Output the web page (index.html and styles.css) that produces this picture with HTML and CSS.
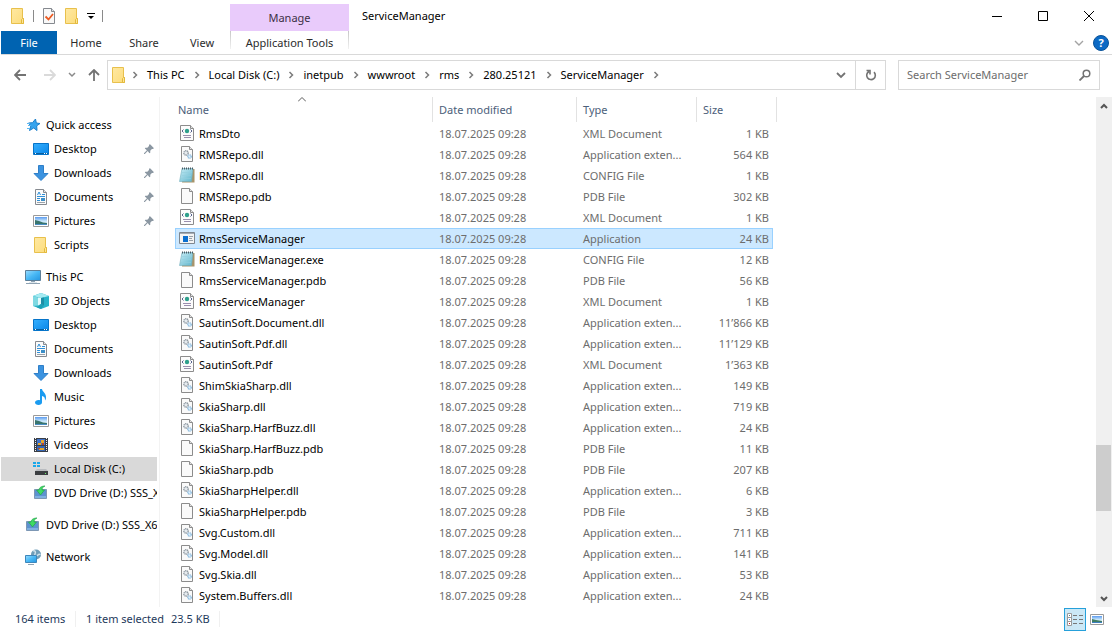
FILE: index.html
```html
<!DOCTYPE html>
<html lang="en">
<head>
    <meta charset="UTF-8">
    <meta name="viewport" content="width=device-width, initial-scale=1.0">
    <title>ServiceManager</title>
    <link rel="stylesheet" href="styles.css">
</head>
<body>

    <!-- Icon set -->
    <svg class="sprite" aria-hidden="true">
        <defs>
            <linearGradient id="gScreen" x1="0" y1="0" x2="1" y2="1">
                <stop offset="0" stop-color="#35b0ff"/><stop offset="1" stop-color="#0a86e8"/>
            </linearGradient>
            <linearGradient id="gPc" x1="0" y1="0" x2="1" y2="1">
                <stop offset="0" stop-color="#9adcff"/><stop offset="0.5" stop-color="#48b8f5"/><stop offset="1" stop-color="#2595e0"/>
            </linearGradient>
            <linearGradient id="gNote" x1="0" y1="0" x2="1" y2="1">
                <stop offset="0" stop-color="#c8edf5"/><stop offset="1" stop-color="#5fb5cc"/>
            </linearGradient>
            <linearGradient id="gFolder" x1="0" y1="0" x2="1" y2="1">
                <stop offset="0" stop-color="#ffe9a2"/><stop offset="1" stop-color="#fcdc7c"/>
            </linearGradient>
            <linearGradient id="gSky" x1="0" y1="0" x2="0" y2="1">
                <stop offset="0" stop-color="#5b9bf0"/><stop offset="0.5" stop-color="#c8e6fa"/><stop offset="1" stop-color="#e8f4fa"/>
            </linearGradient>
        </defs>
        <symbol id="i-folder" viewBox="0 0 16 16">
            <path d="M1.500.500h11v10h1v5h-12z" fill="url(#gFolder)" stroke="#e8c04c"/>
            <path d="M11.500 15.500v-4l1-1h1v5z" fill="#fde596" stroke="#e3b93c"/>
        </symbol>
        <symbol id="i-props" viewBox="0 0 16 16">
            <path d="M2.500.500h8l3 3v12h-11z" fill="#f8f8f8" stroke="#85898f"/>
            <path d="M10.500.500v3h3" fill="#dfe2e6" stroke="#85898f"/>
            <path d="M4.500 8.500l3 3 4.500-5.500" fill="none" stroke="#ea5a22" stroke-width="1.800"/>
        </symbol>
        <symbol id="i-star" viewBox="0 0 16 16">
            <path d="M10.500 2l.8 4 3.700.5-3.300 2.300.3 4.700-3.300-2.500-4.200 2.500 1.300-4.500L3.500 6l4-.3z" fill="#36a4ee" stroke="#1c7fcb"/>
            <path d="M2 6.500h3M3 8.500h3M2 11.500h3" stroke="#5cb6f0"/>
        </symbol>
        <symbol id="i-desktop" viewBox="0 0 16 16">
            <path d="M.500 2.500h15v11H.5z" fill="url(#gScreen)" stroke="#0674c9"/>
            <path d="M1 12.500h14" stroke="#085f9f"/>
            <path d="M2 12.500h1M11 12.500h1M13 12.500h1" stroke="#fff"/>
        </symbol>
        <symbol id="i-download" viewBox="0 0 16 16">
            <path d="M5.500.500h5v8h4.500L8 15.500 1 8.500h4.500z" fill="#3b93e0" stroke="#2f7fc8"/>
        </symbol>
        <symbol id="i-doc" viewBox="0 0 16 16">
            <path d="M2.500.500h8l3 3v12h-11z" fill="#fbfbfb" stroke="#868a90"/>
            <path d="M10.500.500v3h3" fill="#e2e5e8" stroke="#868a90"/>
            <path d="M4.500 6l1.500-3 1.500 3M9 5.500h3M4 7.500h8M4 9.500h3M4 11.500h3" fill="none" stroke="#2e8fd8"/>
            <path d="M8 9h4v3H8z" fill="#3c8fc8"/>
            <path d="M4 13.500h8" stroke="#9aa3ab"/>
        </symbol>
        <symbol id="i-picture" viewBox="0 0 16 16">
            <path d="M.500 2.500h15v11H.5z" fill="#fff" stroke="#9a9a9a"/>
            <path d="M2 4h12v8H2z" fill="url(#gSky)"/>
            <path d="M2 7l4 1 4 1.500 4 .5v2H2z" fill="#39756e"/>
            <path d="M2 11h12v1H2z" fill="#4a8ec4"/>
        </symbol>
        <symbol id="i-pc" viewBox="0 0 16 16">
            <path d="M.500 1.500h15v10H.5z" fill="url(#gPc)" stroke="#5c7f99"/>
            <path d="M6 12.500h4M1 14.500h14" stroke="#8fa3b3"/>
            <path d="M4 13.500h8" stroke="#dde6ec"/>
        </symbol>
        <symbol id="i-cube" viewBox="0 0 16 16">
            <path d="M0 3l8-3 8 3v10l-8 3-8-3z" fill="#27b3c8"/>
            <path d="M0 3l8-3 8 3-8 2z" fill="#a6ebf2"/>
            <path d="M0 3l5 1.500v8L0 13z" fill="#7fd9e2"/>
            <path d="M5 4.500L8 5v6l-3 1.500z" fill="#e3fafc"/>
            <path d="M8 5l3-.5v8L8 11z" fill="#1d8ea6"/>
            <path d="M8 11l3 1.500L8 16l-4-1.500z" fill="#1f9fb4"/>
        </symbol>
        <symbol id="i-music" viewBox="0 0 16 16">
            <path d="M7 0h2c.3 3 4.500 4 4 9-.1 1-.5 2-1 2.500.3-2.800-1-4.200-3-4.500v6.500C9 15 7.500 16 5.500 16S2 15 2 13.500 3.500 11 5.500 11c.600 0 1.100.1 1.500.3z" fill="#1a9bf0"/>
        </symbol>
        <symbol id="i-video" viewBox="0 0 16 16">
            <path d="M1 1h14v14H1z" fill="#3b3f46"/>
            <path d="M4 2h8v6H4z" fill="#3f72c8"/>
            <path d="M4 9h8v5H4z" fill="#3566b4"/>
            <path d="M5 6h3v2H5zM8 3h3v3H8zM6 11h5v2H6z" fill="#e9a72a"/>
            <path d="M9 6h2v2H9zM5 11h2v1H5z" fill="#b5472c"/>
            <path d="M2.500 1v14M13.500 1v14" stroke="#f2f2f2" stroke-dasharray="1 1"/>
        </symbol>
        <symbol id="i-disk" viewBox="0 0 16 16">
            <path d="M0 1h3v2H0zM4 1h3v2H4zM0 4h3v2H0zM4 4h3v2H4z" fill="#19a8ea"/>
            <path d="M4 8h9l2 2H2z" fill="#b9bcc0"/>
            <path d="M2 10h13v4H2z" fill="#3c3f42"/>
            <path d="M12 12h1v1h-1z" fill="#6cf06c"/>
        </symbol>
        <symbol id="i-dvd" viewBox="0 0 16 16">
            <path d="M1.500 4.500h12v9h-12z" fill="#5c93cf" stroke="#7d97b4"/>
            <path d="M2 11h11v2H2z" fill="#7eb0e0"/>
            <path d="M12 1c-4 0-6 2-6 4H3.500l4 5 4-5H9c0-2 1-3 3-4z" fill="#3edb62" stroke="#1b9c44" stroke-width=".6"/>
        </symbol>
        <symbol id="i-network" viewBox="0 0 16 16">
            <circle cx="11" cy="5.500" r="5" fill="#6f9db8"/>
            <path d="M8 2c2-1 3 1 2 3s2 2 3 1 2-1 2 0" fill="none" stroke="#cfe2ec" stroke-width="1.500"/>
            <path d="M.500 6.500h11v7H.5z" fill="url(#gPc)" stroke="#3d86bb"/>
            <path d="M3 15.500h6" stroke="#8fa3b3"/>
        </symbol>
        <symbol id="i-pin" viewBox="0 0 12 12">
            <path d="M7 0l5 5-1.500 1-1 0-2 2v2.500l-1 .5-2-2.500L1 12H0v-1l3.500-3.500L1 5.500l.5-1H4l2-2v-1z" fill="#8b97a2"/>
        </symbol>
        <symbol id="f-xml" viewBox="0 0 16 16">
            <path d="M1.500.500h10l3 3v12h-13z" fill="#fcfcfc" stroke="#8c8c8c"/>
            <path d="M11.500.500v3h3" fill="#e4e4e4" stroke="#8c8c8c"/>
            <circle cx="8" cy="6" r="2.200" fill="#2fa08c"/>
            <path d="M4.500 4.500L3 6l1.500 1.500M11.500 4.500L13 6l-1.500 1.500" fill="none" stroke="#56628c"/>
            <path d="M4 10.500h8M5 12.500h7" stroke="#9b8fae"/>
        </symbol>
        <symbol id="f-dll" viewBox="0 0 16 16">
            <path d="M2.500.500h8l3 3v12h-11z" fill="#fafafa" stroke="#8c8c8c"/>
            <path d="M10.500.500v3h3" fill="#e4e4e4" stroke="#8c8c8c"/>
            <circle cx="7" cy="7" r="2.200" fill="#e6ebef" stroke="#8f99a1" stroke-width="1.400" stroke-dasharray="1.200 .5"/>
            <circle cx="10.500" cy="10.500" r="1.700" fill="#dff0fb" stroke="#86b7dc" stroke-width="1.300" stroke-dasharray="1 .5"/>
        </symbol>
        <symbol id="f-config" viewBox="0 0 16 16">
            <path d="M4 2h11.500v13.500H3z" fill="#a8946a"/>
            <path d="M3 1.500h11l-1.500 13H.5z" fill="url(#gNote)" stroke="#72aebd" stroke-width=".6"/>
            <path d="M3 5.500h10M3 8.500h9M2 11.500h10" stroke="#93cfdd" stroke-width=".6"/>
            <path d="M3 1.500h12" stroke="#4b5a63" stroke-width="2" stroke-dasharray="1 1"/>
        </symbol>
        <symbol id="f-file" viewBox="0 0 16 16">
            <path d="M2.500.500h8l3 3v12h-11z" fill="#fafafa" stroke="#8c8c8c"/>
            <path d="M10.500.500v3h3" fill="#e4e4e4" stroke="#8c8c8c"/>
        </symbol>
        <symbol id="f-app" viewBox="0 0 16 16">
            <path d="M.500 2.500h15v11H.5z" fill="#f4f4f4" stroke="#7e8790"/>
            <path d="M1 3.500h14" stroke="#a4acb4"/>
            <path d="M4 6h5v6H4z" fill="#0a6fd0"/>
            <path d="M10 6.500h4M10 8.500h3M10 10.500h4" stroke="#98a0a8"/>
        </symbol>
        <symbol id="i-chev" viewBox="0 0 6 8">
            <path d="M1.500 1l3 3-3 3" fill="none" stroke="#7c7c7c" stroke-width="1.500"/>
        </symbol>
    </svg>

    <div class="window">

        <!-- Title bar and ribbon tabs -->
        <header class="top">
            <div class="quick-tools">
                <svg class="icon"><use href="#i-folder"/></svg>
                <span class="bar"></span>
                <button class="tool" aria-label="Properties"><svg class="icon"><use href="#i-props"/></svg></button>
                <button class="tool" aria-label="New folder"><svg class="icon"><use href="#i-folder"/></svg></button>
                <button class="tool" aria-label="Customize toolbar">
                    <svg width="8" height="8" viewBox="0 0 8 8"><path d="M0 1.500h8" stroke="#000"/><path d="M1 4h6L4 7z"/></svg>
                </button>
                <span class="bar"></span>
            </div>
            <div class="manage">Manage</div>
            <div class="title-row">
                <h1>ServiceManager</h1>
                <div class="controls">
                    <button aria-label="Minimize"><svg width="10" height="10" viewBox="0 0 10 10"><path d="M0 5.500h10"/></svg></button>
                    <button aria-label="Maximize"><svg width="10" height="10" viewBox="0 0 10 10"><path d="M.500.500h9v9H.5z"/></svg></button>
                    <button aria-label="Close"><svg width="10" height="10" viewBox="0 0 10 10"><path d="M0 0l10 10M10 0L0 10"/></svg></button>
                </div>
            </div>

            <nav class="tabs">
                <button class="tab tab-file">File</button>
                <button class="tab">Home</button>
                <button class="tab">Share</button>
                <button class="tab">View</button>
            </nav>
            <button class="tab tab-tools">Application Tools</button>
            <div class="ribbon-end">
                <button aria-label="Expand ribbon"><svg width="10" height="6" viewBox="0 0 10 6"><path d="M1 1l4 4 4-4" fill="none" stroke="#a3a3a3" stroke-width="1.400"/></svg></button>
                <button class="help" aria-label="Help">?</button>
            </div>
        </header>

        <!-- Address bar -->
        <div class="address-row">
            <div class="history">
                <button aria-label="Back"><svg width="12" height="12" viewBox="0 0 12 12"><path d="M12 6H1M6 1L1 6l5 5" fill="none" stroke="#737373" stroke-width="1.800"/></svg></button>
                <button aria-label="Forward"><svg width="12" height="12" viewBox="0 0 12 12"><path d="M0 6h11M6 1l5 5-5 5" fill="none" stroke="#dadada" stroke-width="1.800"/></svg></button>
                <button class="recent" aria-label="Recent locations"><svg width="8" height="6" viewBox="0 0 8 6"><path d="M1 1l3 3 3-3" fill="none" stroke="#8a8a8a" stroke-width="1.500"/></svg></button>
                <button class="up" aria-label="Up"><svg width="12" height="12" viewBox="0 0 12 12"><path d="M6 12V1M1 6l5-5 5 5" fill="none" stroke="#737373" stroke-width="1.800"/></svg></button>
            </div>
            <div class="address">
                <svg class="icon"><use href="#i-folder"/></svg>
                <svg class="chev"><use href="#i-chev"/></svg>
                <a href="#">This PC</a>
                <svg class="chev"><use href="#i-chev"/></svg>
                <a href="#">Local Disk (C:)</a>
                <svg class="chev"><use href="#i-chev"/></svg>
                <a href="#">inetpub</a>
                <svg class="chev"><use href="#i-chev"/></svg>
                <a href="#">wwwroot</a>
                <svg class="chev"><use href="#i-chev"/></svg>
                <a href="#">rms</a>
                <svg class="chev"><use href="#i-chev"/></svg>
                <a href="#">280.25121</a>
                <svg class="chev"><use href="#i-chev"/></svg>
                <a href="#">ServiceManager</a>
                <svg class="chev"><use href="#i-chev"/></svg>
                <button class="drop" aria-label="Previous locations"><svg width="10" height="8" viewBox="0 0 10 8"><path d="M1 2l4 4 4-4" fill="none" stroke="#737373" stroke-width="1.800"/></svg></button>
                <button class="refresh" aria-label="Refresh"><svg width="12" height="12" viewBox="0 0 12 12"><path d="M9 3.200A4.300 4.300 0 1 1 4 2.500M1.500 1.500H5v4" fill="none" stroke="#737373" stroke-width="1.600"/></svg></button>
            </div>
            <div class="search">
                <input type="text" placeholder="Search ServiceManager" aria-label="Search ServiceManager">
                <svg width="12" height="12" viewBox="0 0 12 12"><circle cx="7.500" cy="4.500" r="3.300" fill="none" stroke="#737373" stroke-width="1.500"/><path d="M5 7L.5 11.500" stroke="#737373" stroke-width="1.800"/></svg>
            </div>
        </div>

        <div class="content">

            <!-- Navigation pane -->
            <nav class="sidebar">
                <ul>
                    <li><a href="#"><svg class="icon"><use href="#i-star"/></svg>Quick access</a></li>
                    <li class="sub"><a href="#"><svg class="icon"><use href="#i-desktop"/></svg>Desktop<svg class="pin"><use href="#i-pin"/></svg></a></li>
                    <li class="sub"><a href="#"><svg class="icon"><use href="#i-download"/></svg>Downloads<svg class="pin"><use href="#i-pin"/></svg></a></li>
                    <li class="sub"><a href="#"><svg class="icon"><use href="#i-doc"/></svg>Documents<svg class="pin"><use href="#i-pin"/></svg></a></li>
                    <li class="sub"><a href="#"><svg class="icon"><use href="#i-picture"/></svg>Pictures<svg class="pin"><use href="#i-pin"/></svg></a></li>
                    <li class="sub"><a href="#"><svg class="icon"><use href="#i-folder"/></svg>Scripts</a></li>
                </ul>
                <ul>
                    <li><a href="#"><svg class="icon"><use href="#i-pc"/></svg>This PC</a></li>
                    <li class="sub"><a href="#"><svg class="icon"><use href="#i-cube"/></svg>3D Objects</a></li>
                    <li class="sub"><a href="#"><svg class="icon"><use href="#i-desktop"/></svg>Desktop</a></li>
                    <li class="sub"><a href="#"><svg class="icon"><use href="#i-doc"/></svg>Documents</a></li>
                    <li class="sub"><a href="#"><svg class="icon"><use href="#i-download"/></svg>Downloads</a></li>
                    <li class="sub"><a href="#"><svg class="icon"><use href="#i-music"/></svg>Music</a></li>
                    <li class="sub"><a href="#"><svg class="icon"><use href="#i-picture"/></svg>Pictures</a></li>
                    <li class="sub"><a href="#"><svg class="icon"><use href="#i-video"/></svg>Videos</a></li>
                    <li class="sub current"><a href="#"><svg class="icon"><use href="#i-disk"/></svg>Local Disk (C:)</a></li>
                    <li class="sub"><a href="#"><svg class="icon"><use href="#i-dvd"/></svg>DVD Drive (D:) SSS_X6</a></li>
                </ul>
                <ul>
                    <li><a href="#"><svg class="icon"><use href="#i-dvd"/></svg>DVD Drive (D:) SSS_X6</a></li>
                </ul>
                <ul>
                    <li><a href="#"><svg class="icon"><use href="#i-network"/></svg>Network</a></li>
                </ul>
            </nav>

            <!-- File list -->
            <main class="files">
                <table>
                    <colgroup>
                        <col class="c-name"><col class="c-date"><col class="c-type"><col class="c-size">
                    </colgroup>
                    <thead>
                        <tr>
                            <th>Name<svg class="sort" width="8" height="5" viewBox="0 0 8 5"><path d="M0 4.500l4-4 4 4" fill="none" stroke="#5a5a5a"/></svg></th>
                            <th>Date modified</th>
                            <th>Type</th>
                            <th>Size</th>
                        </tr>
                    </thead>
                    <tbody>
                        <tr><td><svg class="icon"><use href="#f-xml"/></svg>RmsDto</td><td>18.07.2025 09:28</td><td>XML Document</td><td>1 KB</td></tr>
                        <tr><td><svg class="icon"><use href="#f-dll"/></svg>RMSRepo.dll</td><td>18.07.2025 09:28</td><td>Application exten...</td><td>564 KB</td></tr>
                        <tr><td><svg class="icon"><use href="#f-config"/></svg>RMSRepo.dll</td><td>18.07.2025 09:28</td><td>CONFIG File</td><td>1 KB</td></tr>
                        <tr><td><svg class="icon"><use href="#f-file"/></svg>RMSRepo.pdb</td><td>18.07.2025 09:28</td><td>PDB File</td><td>302 KB</td></tr>
                        <tr><td><svg class="icon"><use href="#f-xml"/></svg>RMSRepo</td><td>18.07.2025 09:28</td><td>XML Document</td><td>1 KB</td></tr>
                        <tr class="selected"><td><svg class="icon"><use href="#f-app"/></svg>RmsServiceManager</td><td>18.07.2025 09:28</td><td>Application</td><td>24 KB</td></tr>
                        <tr><td><svg class="icon"><use href="#f-config"/></svg>RmsServiceManager.exe</td><td>18.07.2025 09:28</td><td>CONFIG File</td><td>12 KB</td></tr>
                        <tr><td><svg class="icon"><use href="#f-file"/></svg>RmsServiceManager.pdb</td><td>18.07.2025 09:28</td><td>PDB File</td><td>56 KB</td></tr>
                        <tr><td><svg class="icon"><use href="#f-xml"/></svg>RmsServiceManager</td><td>18.07.2025 09:28</td><td>XML Document</td><td>1 KB</td></tr>
                        <tr><td><svg class="icon"><use href="#f-dll"/></svg>SautinSoft.Document.dll</td><td>18.07.2025 09:28</td><td>Application exten...</td><td>11’866 KB</td></tr>
                        <tr><td><svg class="icon"><use href="#f-dll"/></svg>SautinSoft.Pdf.dll</td><td>18.07.2025 09:28</td><td>Application exten...</td><td>11’129 KB</td></tr>
                        <tr><td><svg class="icon"><use href="#f-xml"/></svg>SautinSoft.Pdf</td><td>18.07.2025 09:28</td><td>XML Document</td><td>1’363 KB</td></tr>
                        <tr><td><svg class="icon"><use href="#f-dll"/></svg>ShimSkiaSharp.dll</td><td>18.07.2025 09:28</td><td>Application exten...</td><td>149 KB</td></tr>
                        <tr><td><svg class="icon"><use href="#f-dll"/></svg>SkiaSharp.dll</td><td>18.07.2025 09:28</td><td>Application exten...</td><td>719 KB</td></tr>
                        <tr><td><svg class="icon"><use href="#f-dll"/></svg>SkiaSharp.HarfBuzz.dll</td><td>18.07.2025 09:28</td><td>Application exten...</td><td>24 KB</td></tr>
                        <tr><td><svg class="icon"><use href="#f-file"/></svg>SkiaSharp.HarfBuzz.pdb</td><td>18.07.2025 09:28</td><td>PDB File</td><td>11 KB</td></tr>
                        <tr><td><svg class="icon"><use href="#f-file"/></svg>SkiaSharp.pdb</td><td>18.07.2025 09:28</td><td>PDB File</td><td>207 KB</td></tr>
                        <tr><td><svg class="icon"><use href="#f-dll"/></svg>SkiaSharpHelper.dll</td><td>18.07.2025 09:28</td><td>Application exten...</td><td>6 KB</td></tr>
                        <tr><td><svg class="icon"><use href="#f-file"/></svg>SkiaSharpHelper.pdb</td><td>18.07.2025 09:28</td><td>PDB File</td><td>3 KB</td></tr>
                        <tr><td><svg class="icon"><use href="#f-dll"/></svg>Svg.Custom.dll</td><td>18.07.2025 09:28</td><td>Application exten...</td><td>711 KB</td></tr>
                        <tr><td><svg class="icon"><use href="#f-dll"/></svg>Svg.Model.dll</td><td>18.07.2025 09:28</td><td>Application exten...</td><td>141 KB</td></tr>
                        <tr><td><svg class="icon"><use href="#f-dll"/></svg>Svg.Skia.dll</td><td>18.07.2025 09:28</td><td>Application exten...</td><td>53 KB</td></tr>
                        <tr><td><svg class="icon"><use href="#f-dll"/></svg>System.Buffers.dll</td><td>18.07.2025 09:28</td><td>Application exten...</td><td>24 KB</td></tr>
                    </tbody>
                </table>
            </main>

            <!-- Scrollbar -->
            <div class="scrollbar">
                <button aria-label="Scroll up"><svg width="8" height="6" viewBox="0 0 8 6"><path d="M1 5l3-3 3 3" fill="none" stroke="#555" stroke-width="2"/></svg></button>
                <div class="track"><div class="thumb"></div></div>
                <button aria-label="Scroll down"><svg width="8" height="6" viewBox="0 0 8 6"><path d="M1 1l3 3 3-3" fill="none" stroke="#555" stroke-width="2"/></svg></button>
            </div>
        </div>

        <!-- Status bar -->
        <footer class="status">
            <span class="count">164 items</span>
            <span class="picked">1 item selected</span>
            <span class="size">23.5 KB</span>
            <div class="views">
                <button class="active" aria-label="Details view">
                    <svg width="16" height="13" viewBox="0 0 16 13">
                        <path d="M.500.500h4v12h-4zM.500 4.500h4M.500 8.500h4" fill="#fff" stroke="#9a9a9a"/>
                        <path d="M2 2h1v1H2z" fill="#4f7d93"/><path d="M2 6h1v1H2z" fill="#4a90e0"/><path d="M2 10h1v1H2z" fill="#d02020"/>
                        <path d="M6 2.500h4M12 2.500h4M6 6.500h4M12 6.500h4M6 10.500h4M12 10.500h4" stroke="#777"/>
                    </svg>
                </button>
                <button aria-label="Thumbnail view">
                    <svg width="14" height="11" viewBox="0 0 14 11">
                        <path d="M.500.500h13v10H.5z" fill="#fff" stroke="#9a9a9a"/>
                        <path d="M2 2h10v7H2z" fill="url(#gSky)"/>
                        <path d="M2 5l4 1 6 1v1H2z" fill="#3f7d64"/>
                        <path d="M2 8h10v1H2z" fill="#3d7fc0"/>
                    </svg>
                </button>
            </div>
        </footer>

    </div>

</body>
</html>
```

FILE: styles.css
```css
:root {
    --line: #d9d9d9;
    --accent: #0063b1;
    --manage: #e9cbfb;
    --select-bg: #cce8ff;
    --select-line: #99d1ff;
    --muted: #6d6d6d;
    --head: #4c607a;
    --status: #1e395b;
}

* {
    margin: 0;
    padding: 0;
    box-sizing: border-box;
}

body {
    background: white;
    color: black;
    font-family: "Noto Sans", sans-serif;
    font-size: 11px;
    line-height: 16px;
}

button {
    background: none;
    border: none;
    font: inherit;
    color: inherit;
    display: flex;
    align-items: center;
    justify-content: center;
}

a {
    color: inherit;
    text-decoration: none;
}

ul {
    list-style: none;
}

.sprite {
    position: absolute;
    width: 0;
    height: 0;
}

.icon {
    width: 16px;
    height: 16px;
    flex: none;
}

.window {
    height: 100vh;
    padding: 0 1px;
    display: flex;
    flex-direction: column;
    overflow: hidden;
}

/* Title bar and ribbon */
.top {
    display: grid;
    grid-template-columns: 229px 119px 1fr;
    grid-template-rows: 31px 23px;
    border-bottom: 1px solid var(--line);
}

.quick-tools {
    display: flex;
    align-items: center;
    gap: 7px;
    padding-left: 9px;
}

.bar {
    width: 1px;
    height: 12px;
    background: #8a8a8a;
}

.manage {
    margin-top: 4px;
    background: var(--manage);
    color: #3c3045;
    display: flex;
    align-items: center;
    justify-content: center;
}

.title-row {
    display: flex;
    justify-content: space-between;
    align-items: center;
    padding-left: 13px;
}

.title-row h1 {
    font-size: 11px;
    font-weight: normal;
}

.controls {
    display: flex;
    height: 100%;
}

.controls button {
    width: 46px;
}

.controls path {
    fill: none;
    stroke: #000;
}

.tabs {
    display: flex;
}

.tab {
    width: 58px;
    flex: none;
    color: #2b2b2b;
}

.tab-file {
    width: 56px;
    background: var(--accent);
    color: white;
}

.tab-tools {
    width: auto;
    height: 18px;
    padding-top: 6px;
    border: 1px solid;
    border-width: 0 1px;
    border-image: linear-gradient(#c4c4c4, #f4f4f4) 1;
}

.ribbon-end {
    display: flex;
    align-items: center;
    justify-content: flex-end;
    gap: 9px;
    padding-right: 3px;
}

.help {
    width: 16px;
    height: 16px;
    border-radius: 50%;
    background: #0c69c4;
    border: 1px solid #0a5399;
    color: white;
    font-weight: bold;
}

/* Address bar */
.address-row {
    display: flex;
    padding: 5px 12px 7px 13px;
}

.history {
    width: 93px;
    display: flex;
    align-items: center;
    flex: none;
}

.history button + button {
    margin-left: 18px;
}

.history .recent + .up,
.history button + .recent {
    margin-left: 12px;
}

.address {
    flex: 1;
    min-width: 0;
    height: 30px;
    display: flex;
    align-items: center;
    gap: 9px;
    border: 1px solid var(--line);
    padding-left: 3px;
    white-space: nowrap;
}

.address .icon {
    margin-right: -4px;
}

.chev {
    width: 6px;
    height: 8px;
    flex: none;
}

.drop {
    margin-left: auto;
}

.refresh {
    width: 30px;
    height: 100%;
    border-left: 1px solid var(--line);
}

.search {
    width: 202px;
    height: 30px;
    margin-left: 12px;
    padding: 0 8px;
    display: flex;
    align-items: center;
    border: 1px solid var(--line);
}

.search input {
    flex: 1;
    min-width: 0;
    border: none;
    outline: none;
    font: inherit;
}

.search input::placeholder {
    color: var(--muted);
}

/* Main area */
.content {
    flex: 1;
    min-height: 0;
    display: flex;
}

.sidebar {
    width: 159px;
    flex: none;
    padding: 16px 2px 0 0;
    border-right: 1px solid #f3f3f3;
    overflow: hidden;
}

.sidebar ul {
    margin-bottom: 8px;
}

.sidebar a {
    height: 24px;
    padding-left: 24px;
    display: flex;
    align-items: center;
    gap: 5px;
    white-space: nowrap;
    overflow: hidden;
}

.sidebar .sub a {
    padding-left: 32px;
}

.sidebar .current {
    background: #d9d9d9;
}

.pin {
    width: 10px;
    height: 10px;
    margin-left: auto;
    margin-right: 3px;
}

/* File list */
.files {
    flex: 1;
    min-width: 0;
    padding-left: 15px;
    overflow: hidden;
}

table {
    width: 598px;
    table-layout: fixed;
    border-spacing: 0;
}

.c-name { width: 258px; }
.c-date { width: 144px; }
.c-type { width: 120px; }
.c-size { width: 76px; }

th {
    position: relative;
    height: 26px;
    padding-left: 6px;
    text-align: left;
    font-weight: normal;
    color: var(--head);
}

th:first-child {
    padding-left: 3px;
}

/* column dividers */
th::after {
    content: "";
    position: absolute;
    top: 0;
    right: 0;
    width: 1px;
    height: 25px;
    background: #e2e2e2;
}

th:last-child::after {
    right: -4px;
}

.sort {
    position: absolute;
    top: 0;
    left: 50%;
    margin-left: -6px;
}

td {
    height: 21px;
    padding: 0 6px;
    border: 1px solid transparent;
    border-width: 1px 0;
    white-space: nowrap;
    overflow: hidden;
    line-height: 18px;
    color: var(--muted);
}

td:first-child {
    padding-left: 4px;
    color: black;
}

td:first-child .icon {
    margin-right: 4px;
    vertical-align: top;
}

td:last-child {
    padding-right: 4px;
    text-align: right;
}

.selected td {
    background: var(--select-bg);
    border-color: var(--select-line);
}

.selected td:first-child {
    padding-left: 3px;
    border-left-width: 1px;
}

.selected td:last-child {
    padding-right: 3px;
    border-right-width: 1px;
}

/* Scrollbar */
.scrollbar {
    width: 16px;
    flex: none;
    background: #f0f0f0;
    display: flex;
    flex-direction: column;
}

.scrollbar button {
    height: 17px;
}

.track {
    flex: 1;
    padding-right: 1px;
    display: flex;
    flex-direction: column;
}

.track::before {
    content: "";
    flex: 331;
}

.track::after {
    content: "";
    flex: 79;
}

.thumb {
    flex: 66;
    background: #cdcdcd;
}

/* Status bar */
.status {
    height: 24px;
    flex: none;
    display: flex;
    align-items: center;
    padding: 0 8px 0 14px;
    color: var(--status);
}

.count {
    width: 61px;
    border-right: 1px solid #f0f0f0;
}

.picked {
    width: 95px;
    padding-left: 10px;
    white-space: nowrap;
}

.size {
    width: 49px;
    border-right: 1px solid #f0f0f0;
}

.views {
    margin-left: auto;
    display: flex;
    align-items: center;
    gap: 4px;
}

.views .active {
    width: 22px;
    height: 23px;
    background: #cbe8f6;
    border: 1px solid #26a0da;
}
```
